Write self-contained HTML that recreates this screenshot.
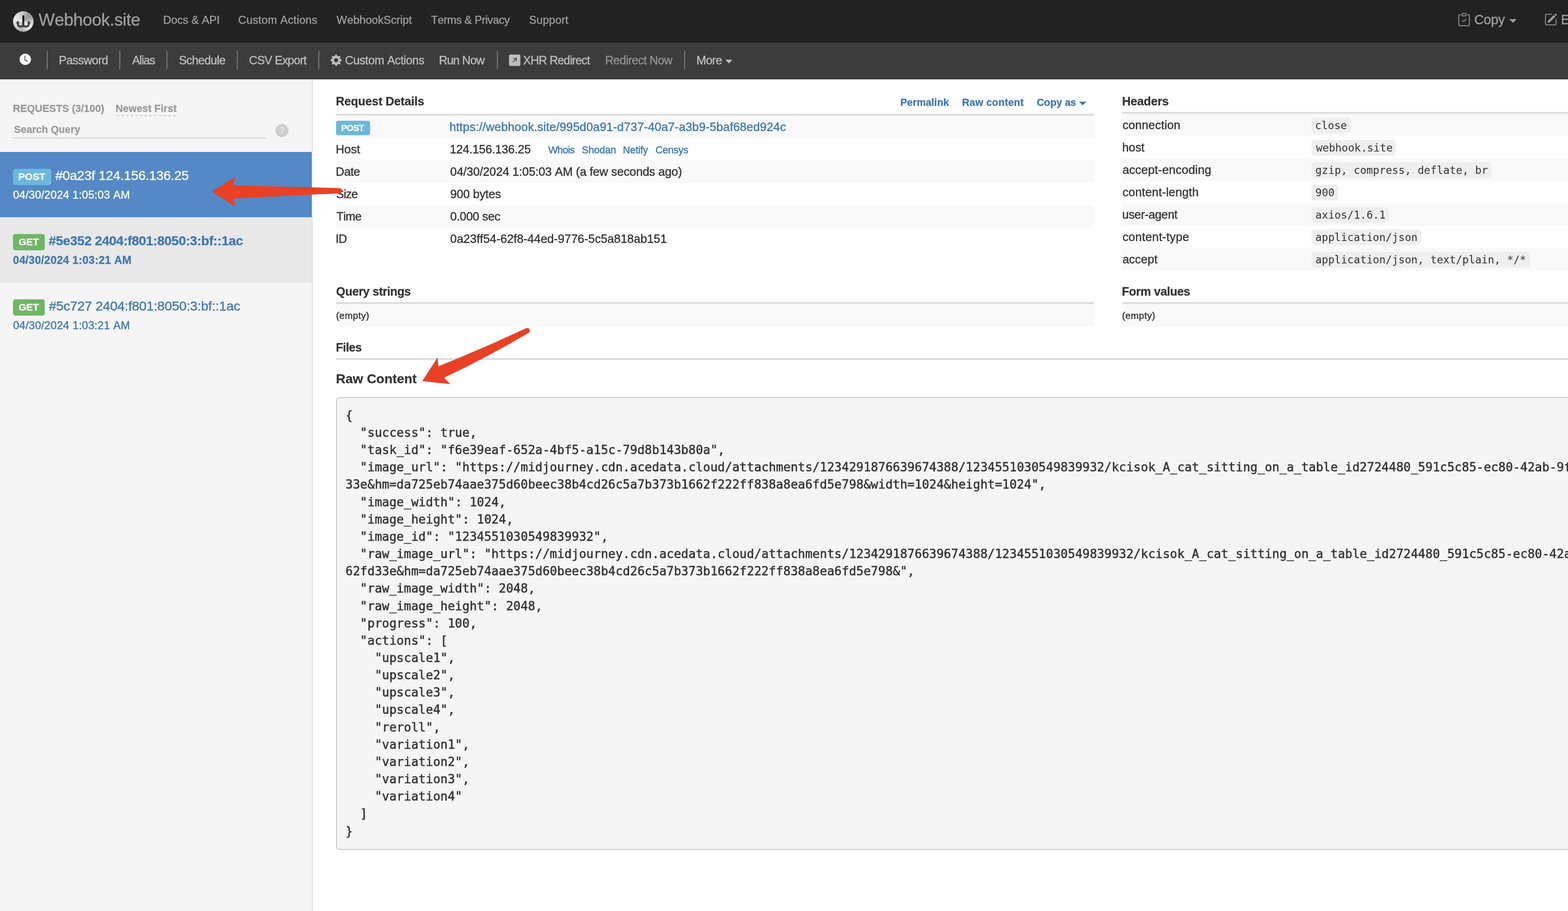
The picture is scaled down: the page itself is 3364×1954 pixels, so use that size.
<!DOCTYPE html>
<html lang="en"><head><meta charset="utf-8">
<meta name="viewport" content="width=3364">
<title>Webhook.site - Test, process and transform emails and HTTP requests</title>
<style>
html,body{margin:0;padding:0}
body{width:3364px;height:1954px;overflow:hidden;background:#fff;position:relative;
 font-family:"Liberation Sans",Arial,Helvetica,sans-serif;font-size:25.2px;color:#333;font-kerning:none;
 -webkit-font-smoothing:antialiased}
.t{position:absolute;white-space:pre;line-height:1;margin:0;padding:0;display:block}
a.t{text-decoration:none}
.abs{position:absolute}
svg{position:absolute;overflow:visible}
nav,aside,main,section,header,ul,li,table,thead,tbody,tr,td,th,h1,h2,h3,h4,h5,p{margin:0;padding:0;border:0;font-weight:inherit;font-size:inherit}
ul{list-style:none}
.layer{position:absolute;left:0;top:0;width:3364px;height:1954px}
#page{position:absolute;left:0;top:0;width:3364px;height:1954px;overflow:hidden;will-change:transform}
pre{margin:0}
</style>
</head><body><div id="page">
<nav class="layer" id="topnav">
<div style="position:absolute;left:0.00px;top:0.00px;width:3364.00px;height:92.00px;background:#222222;"></div>
<div class="abs" style="left:28px;top:24px;width:44px;height:44px;border-radius:50%;background:conic-gradient(from 0deg,#c2c2c2 0deg,#9a9a9a 30deg,#a0a0a0 60deg,#c8c8c8 90deg,#f0f0f0 125deg,#d0d0d0 160deg,#b4b4b4 185deg,#bcbcbc 215deg,#d8d8d8 250deg,#e8e8e8 285deg,#dadada 320deg,#c2c2c2 360deg);"></div>
<svg style="left:28px;top:24px" width="44" height="44" viewBox="0 0 44 44">
<defs><linearGradient id="stem" x1="0" y1="0" x2="0" y2="1"><stop offset="0" stop-color="#050505"/><stop offset="0.45" stop-color="#111"/><stop offset="1" stop-color="#444"/></linearGradient></defs>
<path d="M10.2 25.8 C10.2 31 12.6 32.95 15.8 32.95 C18.4 32.95 20.4 32.2 22 30.9 M33.8 25.8 C33.8 31 31.4 32.95 28.2 32.95 C25.6 32.95 23.6 32.2 22 30.9" fill="none" stroke="#3d3d3d" stroke-width="3.9"/>
<path d="M10.1 20 L13.9 26.3 L6.2 26.3 Z M33.9 20 L37.8 26.3 L30.1 26.3 Z" fill="#3d3d3d"/>
<rect x="20.05" y="9.1" width="4" height="24" fill="url(#stem)"/>
</svg>
<a class="t" style="left:82.86px;top:25px;font-size:36.74px;letter-spacing:-0.388px;color:#9d9d9d;-webkit-text-stroke:0.45px currentColor;">Webhook.site</a>
<a class="t" style="left:350.06px;top:31px;font-size:23.95px;letter-spacing:-0.116px;color:#9d9d9d;-webkit-text-stroke:0.45px currentColor;">Docs &amp; API</a>
<a class="t" style="left:511.01px;top:31px;font-size:23.95px;letter-spacing:0.169px;color:#9d9d9d;-webkit-text-stroke:0.45px currentColor;">Custom Actions</a>
<a class="t" style="left:722.12px;top:31px;font-size:23.95px;letter-spacing:-0.066px;color:#9d9d9d;-webkit-text-stroke:0.45px currentColor;">WebhookScript</a>
<a class="t" style="left:924.79px;top:31px;font-size:23.95px;letter-spacing:-0.467px;color:#9d9d9d;-webkit-text-stroke:0.45px currentColor;">Terms &amp; Privacy</a>
<a class="t" style="left:1134.94px;top:31px;font-size:23.95px;letter-spacing:0.103px;color:#9d9d9d;-webkit-text-stroke:0.45px currentColor;">Support</a>
<svg style="left:3126.6px;top:28.1px" width="28.1" height="28.1" viewBox="0 0 16 16" fill="#9d9d9d">
<path fill-rule="evenodd" d="M10.854 7.146a.5.5 0 0 1 0 .708l-3 3a.5.5 0 0 1-.708 0l-1.5-1.5a.5.5 0 1 1 .708-.708L7.5 9.793l2.646-2.647a.5.5 0 0 1 .708 0z"/>
<path d="M4 1.5H3a2 2 0 0 0-2 2V14a2 2 0 0 0 2 2h10a2 2 0 0 0 2-2V3.5a2 2 0 0 0-2-2h-1v1h1a1 1 0 0 1 1 1V14a1 1 0 0 1-1 1H3a1 1 0 0 1-1-1V3.5a1 1 0 0 1 1-1h1v-1z"/>
<path d="M9.5 1a.5.5 0 0 1 .5.5v1a.5.5 0 0 1-.5.5h-3a.5.5 0 0 1-.5-.5v-1a.5.5 0 0 1 .5-.5h3zm-3-1A1.5 1.5 0 0 0 5 1.5v1A1.5 1.5 0 0 0 6.5 4h3A1.5 1.5 0 0 0 11 2.5v-1A1.5 1.5 0 0 0 9.5 0h-3z"/></svg>
<a class="t" style="left:3162.76px;top:28px;font-size:28.83px;letter-spacing:-0.474px;color:#9d9d9d;-webkit-text-stroke:0.45px currentColor;">Copy</a>
<svg style="left:3237.7px;top:40.9px" width="15.8" height="8" viewBox="0 0 15.8 8"><path d="M0 0H15.8L7.9 8Z" fill="#9d9d9d"/></svg>
<svg style="left:3312.8px;top:27.8px" width="27.9" height="27.9" viewBox="0 0 16 16" fill="#9d9d9d">
<path d="M15.502 1.94a.5.5 0 0 1 0 .706L14.459 3.69l-2-2L13.502.646a.5.5 0 0 1 .707 0l1.293 1.293zm-1.75 2.456-2-2L4.939 9.21a.5.5 0 0 0-.121.196l-.805 2.414a.25.25 0 0 0 .316.316l2.414-.805a.5.5 0 0 0 .196-.12l6.813-6.814z"/>
<path fill-rule="evenodd" d="M1 13.5A1.5 1.5 0 0 0 2.5 15h11a1.5 1.5 0 0 0 1.5-1.5v-6a.5.5 0 0 0-1 0v6a.5.5 0 0 1-.5.5h-11a.5.5 0 0 1-.5-.5v-11a.5.5 0 0 1 .5-.5H9a.5.5 0 0 0 0-1H2.5A1.5 1.5 0 0 0 1 2.5v11z"/></svg>
<a class="t" style="left:3348.76px;top:28px;font-size:28.83px;color:#9d9d9d;-webkit-text-stroke:0.45px currentColor;">Edit</a>
</nav>
<nav class="layer" id="subnav">
<div style="position:absolute;left:0.00px;top:92.00px;width:3364.00px;height:78.00px;background:#3c3c3c;"></div>
<div style="position:absolute;left:0.00px;top:168.40px;width:3364.00px;height:1.40px;background:#333333;"></div>
<div style="position:absolute;left:0.00px;top:169.80px;width:3364.00px;height:2.10px;background:#e2e2e2;"></div>
<svg style="left:42px;top:114.7px" width="24.4" height="24.4" viewBox="0 0 16 16"><circle cx="8" cy="8" r="8" fill="#fff"/>
<path d="M7.5 3.5V9l3.5 2" fill="none" stroke="#3c3c3c" stroke-width="1.05" stroke-linecap="round" stroke-linejoin="round"/></svg>
<div style="position:absolute;left:100.20px;top:109.00px;width:1.90px;height:40.00px;background:#7a7a7a;"></div>
<div style="position:absolute;left:256.00px;top:109.00px;width:1.90px;height:40.00px;background:#7a7a7a;"></div>
<div style="position:absolute;left:357.00px;top:109.00px;width:1.90px;height:40.00px;background:#7a7a7a;"></div>
<div style="position:absolute;left:507.90px;top:109.00px;width:1.90px;height:40.00px;background:#7a7a7a;"></div>
<div style="position:absolute;left:682.90px;top:109.00px;width:1.90px;height:40.00px;background:#7a7a7a;"></div>
<div style="position:absolute;left:1066.00px;top:109.00px;width:1.90px;height:40.00px;background:#7a7a7a;"></div>
<div style="position:absolute;left:1468.10px;top:109.00px;width:1.90px;height:40.00px;background:#7a7a7a;"></div>
<a class="t" style="left:126.04px;top:117px;font-size:25.37px;letter-spacing:-0.721px;color:#bcbcbc;-webkit-text-stroke:0.45px currentColor;">Password</a>
<a class="t" style="left:283.38px;top:117px;font-size:25.37px;letter-spacing:-1.271px;color:#bcbcbc;-webkit-text-stroke:0.45px currentColor;">Alias</a>
<a class="t" style="left:383.67px;top:117px;font-size:25.37px;letter-spacing:-0.755px;color:#bcbcbc;-webkit-text-stroke:0.45px currentColor;">Schedule</a>
<a class="t" style="left:534.04px;top:117px;font-size:25.37px;letter-spacing:-0.949px;color:#bcbcbc;-webkit-text-stroke:0.45px currentColor;">CSV Export</a>
<a class="t" style="left:740.04px;top:117px;font-size:25.37px;letter-spacing:-0.541px;color:#bcbcbc;-webkit-text-stroke:0.45px currentColor;">Custom Actions</a>
<a class="t" style="left:941.64px;top:117px;font-size:25.37px;letter-spacing:-0.965px;color:#bcbcbc;-webkit-text-stroke:0.45px currentColor;">Run Now</a>
<a class="t" style="left:1122.36px;top:117px;font-size:25.37px;letter-spacing:-1.010px;color:#bcbcbc;-webkit-text-stroke:0.45px currentColor;">XHR Redirect</a>
<a class="t" style="left:1298.24px;top:117px;font-size:25.37px;letter-spacing:-0.685px;color:#909090;-webkit-text-stroke:0.45px currentColor;">Redirect Now</a>
<a class="t" style="left:1493.94px;top:117px;font-size:25.37px;letter-spacing:-0.684px;color:#bcbcbc;-webkit-text-stroke:0.45px currentColor;">More</a>
<svg style="left:708.8px;top:116.9px" width="24.3" height="24.3" viewBox="0 0 16 16" fill="#bcbcbc"><path d="M9.405 1.05c-.413-1.4-2.397-1.4-2.81 0l-.1.34a1.464 1.464 0 0 1-2.105.872l-.31-.17c-1.283-.698-2.686.705-1.987 1.987l.169.311c.446.82.023 1.841-.872 2.105l-.34.1c-1.4.413-1.4 2.397 0 2.81l.34.1a1.464 1.464 0 0 1 .872 2.105l-.17.31c-.698 1.283.705 2.686 1.987 1.987l.311-.169a1.464 1.464 0 0 1 2.105.872l.1.34c.413 1.4 2.397 1.4 2.81 0l.1-.34a1.464 1.464 0 0 1 2.105-.872l.31.17c1.283.698 2.686-.705 1.987-1.987l-.169-.311a1.464 1.464 0 0 1 .872-2.105l.34-.1c1.4-.413 1.4-2.397 0-2.81l-.34-.1a1.464 1.464 0 0 1-.872-2.105l.17-.31c.698-1.283-.705-2.686-1.987-1.987l-.311.169a1.464 1.464 0 0 1-2.105-.872l-.1-.34zM8 10.93a2.929 2.929 0 1 1 0-5.86 2.929 2.929 0 0 1 0 5.858z"/></svg>
<svg style="left:1091.8px;top:116.9px" width="24.4" height="24.4" viewBox="0 0 16 16" fill="#bcbcbc"><path d="M14 0a2 2 0 0 1 2 2v12a2 2 0 0 1-2 2H2a2 2 0 0 1-2-2V2a2 2 0 0 1 2-2h12zM5.904 10.803 10 6.707v2.768a.5.5 0 0 0 1 0V5.5a.5.5 0 0 0-.5-.5H6.525a.5.5 0 1 0 0 1h2.768l-4.096 4.096a.5.5 0 0 0 .707.707z"/></svg>
<svg style="left:1556.4px;top:128.2px" width="15.6" height="8" viewBox="0 0 15.6 8"><path d="M0 0H15.6L7.8 8Z" fill="#bcbcbc"/></svg>
</nav>
<aside class="layer" id="sidebar">
<div style="position:absolute;left:0.00px;top:171.90px;width:669.10px;height:1782.10px;background:#f5f5f5;"></div>
<div style="position:absolute;left:669.10px;top:171.90px;width:1.80px;height:1782.10px;background:#dedede;"></div>
<span class="t" style="left:27.58px;top:222px;font-size:21.92px;letter-spacing:0.007px;font-weight:700;color:#999999;-webkit-text-stroke:0.3px currentColor;">REQUESTS (3/100)</span>
<a class="t" style="left:247.88px;top:222px;font-size:21.92px;letter-spacing:0.079px;font-weight:700;color:#999999;-webkit-text-stroke:0.3px currentColor;">Newest First</a>
<div class="abs" style="left:250px;top:247px;width:126.7px;height:2px;background:repeating-linear-gradient(90deg,#cdcdcd 0,#cdcdcd 6px,transparent 6px,transparent 10.06px)"></div>
<span class="t" style="left:30.12px;top:267px;font-size:21.92px;letter-spacing:-0.039px;font-weight:700;color:#999999;-webkit-text-stroke:0.3px currentColor;">Search Query</span>
<div style="position:absolute;left:26.70px;top:295.30px;width:545.00px;height:2.00px;background:#d4d4d4;"></div>
<svg style="left:590.8px;top:266.1px" width="27.8" height="27.8" viewBox="0 0 16 16" fill="#cdcdcd"><circle cx="8" cy="8" r="6" fill="#e9e9e9"/><path d="M16 8A8 8 0 1 1 0 8a8 8 0 0 1 16 0zM5.496 6.033h.825c.138 0 .248-.113.266-.25.09-.656.54-1.134 1.342-1.134.686 0 1.314.343 1.314 1.168 0 .635-.374.927-.965 1.371-.673.489-1.206 1.06-1.168 1.987l.003.217a.25.25 0 0 0 .25.246h.811a.25.25 0 0 0 .25-.25v-.105c0-.718.273-.927 1.01-1.486.609-.463 1.244-.977 1.244-2.056 0-1.511-1.276-2.241-2.673-2.241-1.267 0-2.655.59-2.75 2.286a.237.237 0 0 0 .241.247zm2.325 6.443c.61 0 1.029-.394 1.029-.927 0-.552-.42-.94-1.029-.94-.584 0-1.009.388-1.009.94 0 .533.425.927 1.01.927z"/></svg>
<div style="position:absolute;left:669.10px;top:326.00px;width:1.80px;height:140.00px;background:#eef3fa;"></div>
<ul>
<li>
<div style="position:absolute;left:0.00px;top:326.00px;width:669.10px;height:140.00px;background:#5588c6;"></div>
<div style="position:absolute;left:28.10px;top:362.00px;width:81.90px;height:34.80px;background:#6cb8dc;border-radius:5px;"></div>
<span class="t" style="left:39.34px;top:368px;font-size:21.11px;letter-spacing:0.153px;font-weight:700;color:#fff;-webkit-text-stroke:0.3px currentColor;">POST</span>
<a class="t" style="left:118.80px;top:362px;font-size:28.52px;letter-spacing:-0.347px;color:#ffffff;-webkit-text-stroke:0.45px currentColor;">#0a23f 124.156.136.25</a>
<span class="t" style="left:27.90px;top:406px;font-size:23.75px;letter-spacing:0.199px;color:#ffffff;-webkit-text-stroke:0.45px currentColor;">04/30/2024 1:05:03 AM</span>
</li>
<li>
<div style="position:absolute;left:0.00px;top:466.00px;width:669.10px;height:140.00px;background:#e8e8e8;"></div>
<div style="position:absolute;left:28.00px;top:502.00px;width:67.80px;height:34.80px;background:#70b665;border-radius:5px;"></div>
<span class="t" style="left:39.88px;top:508px;font-size:21.11px;letter-spacing:0.047px;font-weight:700;color:#fff;-webkit-text-stroke:0.3px currentColor;">GET</span>
<a class="t" style="left:104.46px;top:502px;font-size:28.52px;letter-spacing:-0.574px;font-weight:700;color:#3e76b4;-webkit-text-stroke:0.3px currentColor;">#5e352 2404:f801:8050:3:bf::1ac</a>
<span class="t" style="left:27.81px;top:546px;font-size:23.75px;letter-spacing:0.173px;font-weight:700;color:#3e76b4;-webkit-text-stroke:0.3px currentColor;">04/30/2024 1:03:21 AM</span>
</li>
<li>
<div style="position:absolute;left:0.00px;top:606.00px;width:669.10px;height:140.00px;background:#f5f5f5;"></div>
<div style="position:absolute;left:28.00px;top:642.00px;width:67.80px;height:34.80px;background:#70b665;border-radius:5px;"></div>
<span class="t" style="left:39.88px;top:648px;font-size:21.11px;letter-spacing:0.047px;font-weight:700;color:#fff;-webkit-text-stroke:0.3px currentColor;">GET</span>
<a class="t" style="left:104.90px;top:642px;font-size:28.52px;letter-spacing:-0.212px;color:#3e76b4;-webkit-text-stroke:0.45px currentColor;">#5c727 2404:f801:8050:3:bf::1ac</a>
<span class="t" style="left:27.90px;top:686px;font-size:23.75px;letter-spacing:0.199px;color:#3e76b4;-webkit-text-stroke:0.45px currentColor;">04/30/2024 1:03:21 AM</span>
</li>
</ul>
</aside>
<main class="layer" id="main">
<section id="request-details">
<h4 class="t" style="left:720.44px;top:205px;font-size:25.58px;letter-spacing:-0.153px;font-weight:700;-webkit-text-stroke:0.3px currentColor;">Request Details</h4>
<a class="t" style="left:1931.38px;top:209px;font-size:21.92px;letter-spacing:-0.020px;font-weight:700;color:#3b76b5;-webkit-text-stroke:0.3px currentColor;">Permalink</a>
<a class="t" style="left:2064.08px;top:209px;font-size:21.92px;letter-spacing:0.190px;font-weight:700;color:#3b76b5;-webkit-text-stroke:0.3px currentColor;">Raw content</a>
<a class="t" style="left:2224.15px;top:209px;font-size:21.92px;letter-spacing:-0.098px;font-weight:700;color:#3b76b5;-webkit-text-stroke:0.3px currentColor;">Copy as</a>
<svg style="left:2315.2px;top:217.9px" width="15.4" height="8" viewBox="0 0 15.4 8"><path d="M0 0H15.4L7.7 8Z" fill="#3b76b5"/></svg>
<div style="position:absolute;left:721.40px;top:244.20px;width:1625.50px;height:3.50px;background:#dddddd;"></div>
<div style="position:absolute;left:721.40px;top:247.70px;width:1625.50px;height:48.00px;background:#f9f9f9;"></div>
<div style="position:absolute;left:721.00px;top:259.00px;width:73.00px;height:30.80px;background:#6cb8dc;border-radius:4.5px;"></div>
<span class="t" style="left:731.87px;top:265px;font-size:19.18px;letter-spacing:-0.880px;font-weight:700;color:#fff;-webkit-text-stroke:0.3px currentColor;">POST</span>
<a class="t" style="left:964.25px;top:260px;font-size:25.58px;letter-spacing:0.145px;color:#3b76b5;-webkit-text-stroke:0.45px currentColor;">https://webhook.site/995d0a91-d737-40a7-a3b9-5baf68ed924c</a>
<span class="t" style="left:720.13px;top:308px;font-size:25.58px;letter-spacing:-0.052px;-webkit-text-stroke:0.45px currentColor;">Host</span>
<span class="t" style="left:964.88px;top:308px;font-size:25.58px;letter-spacing:-0.279px;-webkit-text-stroke:0.45px currentColor;">124.156.136.25</span>
<div style="position:absolute;left:721.40px;top:343.70px;width:1625.50px;height:48.00px;background:#f9f9f9;"></div>
<span class="t" style="left:720.13px;top:356px;font-size:25.58px;letter-spacing:-0.448px;-webkit-text-stroke:0.45px currentColor;">Date</span>
<span class="t" style="left:965.83px;top:356px;font-size:25.58px;letter-spacing:-0.151px;-webkit-text-stroke:0.45px currentColor;">04/30/2024 1:05:03 AM (a few seconds ago)</span>
<span class="t" style="left:721.06px;top:404px;font-size:25.58px;letter-spacing:-0.903px;-webkit-text-stroke:0.45px currentColor;">Size</span>
<span class="t" style="left:965.63px;top:404px;font-size:25.58px;letter-spacing:-0.193px;-webkit-text-stroke:0.45px currentColor;">900 bytes</span>
<div style="position:absolute;left:721.40px;top:439.70px;width:1625.50px;height:48.00px;background:#f9f9f9;"></div>
<span class="t" style="left:721.65px;top:452px;font-size:25.58px;letter-spacing:-0.859px;-webkit-text-stroke:0.45px currentColor;">Time</span>
<span class="t" style="left:965.83px;top:452px;font-size:25.58px;letter-spacing:-0.399px;-webkit-text-stroke:0.45px currentColor;">0.000 sec</span>
<span class="t" style="left:719.86px;top:500px;font-size:25.58px;letter-spacing:-0.644px;-webkit-text-stroke:0.45px currentColor;">ID</span>
<span class="t" style="left:965.83px;top:500px;font-size:25.58px;letter-spacing:-0.045px;-webkit-text-stroke:0.45px currentColor;">0a23ff54-62f8-44ed-9776-5c5a818ab151</span>
<a class="t" style="left:1176.13px;top:311px;font-size:21.72px;letter-spacing:-0.779px;color:#3b76b5;-webkit-text-stroke:0.45px currentColor;">Whois</a>
<a class="t" style="left:1248.24px;top:311px;font-size:21.72px;letter-spacing:-0.248px;color:#3b76b5;-webkit-text-stroke:0.45px currentColor;">Shodan</a>
<a class="t" style="left:1336.34px;top:311px;font-size:21.72px;letter-spacing:-0.290px;color:#3b76b5;-webkit-text-stroke:0.45px currentColor;">Netify</a>
<a class="t" style="left:1406.22px;top:311px;font-size:21.72px;letter-spacing:-0.358px;color:#3b76b5;-webkit-text-stroke:0.45px currentColor;">Censys</a>
</section>
<section id="headers">
<h4 class="t" style="left:2407.14px;top:205px;font-size:25.58px;letter-spacing:-0.082px;font-weight:700;-webkit-text-stroke:0.3px currentColor;">Headers</h4>
<div style="position:absolute;left:2407.30px;top:240.30px;width:956.70px;height:3.50px;background:#dddddd;"></div>
<div style="position:absolute;left:2407.30px;top:243.80px;width:956.70px;height:48.00px;background:#f9f9f9;"></div>
<span class="t" style="left:2408.14px;top:256px;font-size:25.58px;letter-spacing:0.064px;-webkit-text-stroke:0.45px currentColor;">connection</span>
<div style="position:absolute;left:2814.30px;top:251.70px;width:83.77px;height:34.20px;background:#efefef;border-radius:6.5px;"></div>
<code class="t" style="left:2821.31px;top:258px;font-size:22.78px;color:#333;font-family:"DejaVu Sans Mono","Liberation Mono",monospace;-webkit-text-stroke:0.55px currentColor;">close</code>
<span class="t" style="left:2407.45px;top:304px;font-size:25.58px;letter-spacing:-0.112px;-webkit-text-stroke:0.45px currentColor;">host</span>
<div style="position:absolute;left:2814.30px;top:299.70px;width:179.78px;height:34.20px;background:#efefef;border-radius:6.5px;"></div>
<code class="t" style="left:2823.47px;top:306px;font-size:22.78px;color:#333;font-family:"DejaVu Sans Mono","Liberation Mono",monospace;-webkit-text-stroke:0.55px currentColor;">webhook.site</code>
<div style="position:absolute;left:2407.30px;top:339.80px;width:956.70px;height:48.00px;background:#f9f9f9;"></div>
<span class="t" style="left:2408.14px;top:352px;font-size:25.58px;letter-spacing:0.199px;-webkit-text-stroke:0.45px currentColor;">accept-encoding</span>
<div style="position:absolute;left:2814.30px;top:347.70px;width:385.50px;height:34.20px;background:#efefef;border-radius:6.5px;"></div>
<code class="t" style="left:2822.11px;top:354px;font-size:22.78px;color:#333;font-family:"DejaVu Sans Mono","Liberation Mono",monospace;-webkit-text-stroke:0.55px currentColor;">gzip, compress, deflate, br</code>
<span class="t" style="left:2408.14px;top:400px;font-size:25.58px;letter-spacing:0.122px;-webkit-text-stroke:0.45px currentColor;">content-length</span>
<div style="position:absolute;left:2814.30px;top:395.70px;width:56.34px;height:34.20px;background:#efefef;border-radius:6.5px;"></div>
<code class="t" style="left:2822.06px;top:402px;font-size:22.78px;color:#333;font-family:"DejaVu Sans Mono","Liberation Mono",monospace;-webkit-text-stroke:0.55px currentColor;">900</code>
<div style="position:absolute;left:2407.30px;top:435.80px;width:956.70px;height:48.00px;background:#f9f9f9;"></div>
<span class="t" style="left:2407.56px;top:448px;font-size:25.58px;letter-spacing:-0.387px;-webkit-text-stroke:0.45px currentColor;">user-agent</span>
<div style="position:absolute;left:2814.30px;top:443.70px;width:166.06px;height:34.20px;background:#efefef;border-radius:6.5px;"></div>
<code class="t" style="left:2822.00px;top:450px;font-size:22.78px;color:#333;font-family:"DejaVu Sans Mono","Liberation Mono",monospace;-webkit-text-stroke:0.55px currentColor;">axios/1.6.1</code>
<span class="t" style="left:2408.14px;top:496px;font-size:25.58px;letter-spacing:0.210px;-webkit-text-stroke:0.45px currentColor;">content-type</span>
<div style="position:absolute;left:2814.30px;top:491.70px;width:234.64px;height:34.20px;background:#efefef;border-radius:6.5px;"></div>
<code class="t" style="left:2822.00px;top:498px;font-size:22.78px;color:#333;font-family:"DejaVu Sans Mono","Liberation Mono",monospace;-webkit-text-stroke:0.55px currentColor;">application/json</code>
<div style="position:absolute;left:2407.30px;top:531.80px;width:956.70px;height:48.00px;background:#f9f9f9;"></div>
<span class="t" style="left:2408.14px;top:544px;font-size:25.58px;letter-spacing:-0.027px;-webkit-text-stroke:0.45px currentColor;">accept</span>
<div style="position:absolute;left:2814.30px;top:539.70px;width:467.79px;height:34.20px;background:#efefef;border-radius:6.5px;"></div>
<code class="t" style="left:2822.00px;top:546px;font-size:22.78px;color:#333;font-family:"DejaVu Sans Mono","Liberation Mono",monospace;-webkit-text-stroke:0.55px currentColor;">application/json, text/plain, */*</code>
</section>
<section id="query-strings">
<h4 class="t" style="left:721.10px;top:613px;font-size:25.58px;letter-spacing:-0.484px;font-weight:700;-webkit-text-stroke:0.3px currentColor;">Query strings</h4>
<div style="position:absolute;left:721.40px;top:648.20px;width:1625.50px;height:3.60px;background:#dddddd;"></div>
<div style="position:absolute;left:721.40px;top:651.80px;width:1625.50px;height:48.90px;background:#f9f9f9;"></div>
<span class="t" style="left:720.97px;top:667px;font-size:20.30px;letter-spacing:0.378px;-webkit-text-stroke:0.45px currentColor;">(empty)</span>
</section>
<section id="form-values">
<h4 class="t" style="left:2406.64px;top:613px;font-size:25.58px;letter-spacing:-0.372px;font-weight:700;-webkit-text-stroke:0.3px currentColor;">Form values</h4>
<div style="position:absolute;left:2407.30px;top:648.20px;width:956.70px;height:3.60px;background:#dddddd;"></div>
<div style="position:absolute;left:2407.30px;top:651.80px;width:956.70px;height:48.90px;background:#f9f9f9;"></div>
<span class="t" style="left:2407.17px;top:667px;font-size:20.30px;letter-spacing:0.378px;-webkit-text-stroke:0.45px currentColor;">(empty)</span>
</section>
<section id="files">
<h4 class="t" style="left:720.44px;top:733px;font-size:25.58px;letter-spacing:-0.582px;font-weight:700;-webkit-text-stroke:0.3px currentColor;">Files</h4>
<div style="position:absolute;left:721.40px;top:768.10px;width:2642.60px;height:3.60px;background:#dddddd;"></div>
</section>
<section id="raw-content">
<h4 class="t" style="left:720.76px;top:798px;font-size:28.32px;letter-spacing:0.019px;font-weight:700;-webkit-text-stroke:0.3px currentColor;">Raw Content</h4>
<pre class="abs" style="left:721.3px;top:851.9px;width:2700px;height:971.2px;box-sizing:border-box;border:2px solid #cbcbcb;border-radius:7.2px;background:#f5f5f5;color:#333;overflow:hidden;-webkit-text-stroke:0.6px currentColor;font-family:&quot;DejaVu Sans Mono&quot;,&quot;Liberation Mono&quot;,monospace;font-size:26.015px;line-height:37.15px;padding:18.9px 0 0 18.0px;white-space:pre;">{
  "success": true,
  "task_id": "f6e39eaf-652a-4bf5-a15c-79d8b143b80a",
  "image_url": "https://midjourney.cdn.acedata.cloud/attachments/1234291876639674388/1234551030549839932/kcisok_A_cat_sitting_on_a_table_id2724480_591c5c85-ec80-42ab-9f
33e&amp;hm=da725eb74aae375d60beec38b4cd26c5a7b373b1662f222ff838a8ea6fd5e798&amp;width=1024&amp;height=1024",
  "image_width": 1024,
  "image_height": 1024,
  "image_id": "1234551030549839932",
  "raw_image_url": "https://midjourney.cdn.acedata.cloud/attachments/1234291876639674388/1234551030549839932/kcisok_A_cat_sitting_on_a_table_id2724480_591c5c85-ec80-42a
62fd33e&amp;hm=da725eb74aae375d60beec38b4cd26c5a7b373b1662f222ff838a8ea6fd5e798&amp;",
  "raw_image_width": 2048,
  "raw_image_height": 2048,
  "progress": 100,
  "actions": [
    "upscale1",
    "upscale2",
    "upscale3",
    "upscale4",
    "reroll",
    "variation1",
    "variation2",
    "variation3",
    "variation4"
  ]
}</pre>
</section>
</main>
<svg class="layer" width="3364" height="1954" viewBox="0 0 3364 1954" style="left:0;top:0;pointer-events:none">
<path d="M454.3 411.1 L504.9 380 L501 395.4 Q500.9 397.3 503.6 397.5 L728.3 403.5 A5.8 5.8 0 0 1 728.3 415.1 Q614.8 419.2 503.6 425.9 Q500.9 426.2 501.3 428 L505.3 442.9 Z" fill="#e84126"/>
<path d="M906 817.5 L938.5 767 L940.8 785.6 Q1035.7 747.5 1128.3 704.2 A5.6 5.6 0 0 1 1133.9 713.9 Q1045.7 766.2 952.9 810.1 L965.9 823.9 Z" fill="#e84126"/>
</svg>
</div></body></html>
